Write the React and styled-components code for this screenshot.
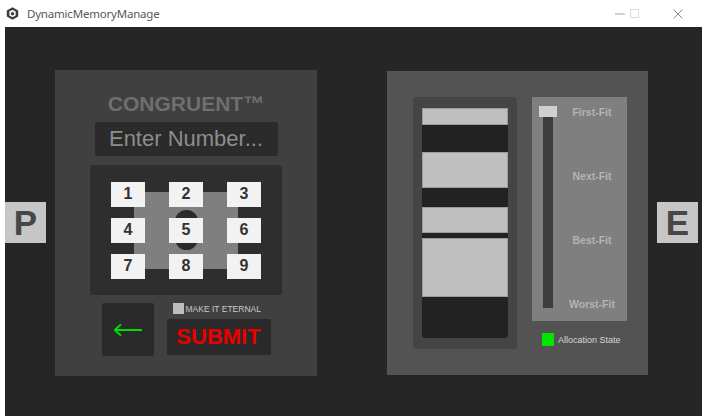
import React from 'react';
import styled, { createGlobalStyle } from 'styled-components';

const Global = createGlobalStyle`
  html, body { margin: 0; padding: 0; background: #fff; }
  body { font-family: "Liberation Sans", Arial, sans-serif; }
  #root { width: 702px; height: 418px; }
  * { box-sizing: border-box; }
`;

const Window = styled.div`
  width: 702px;
  height: 418px;
  display: flex;
  flex-direction: column;
  background: #fff;
  overflow: hidden;
`;

const TitleBar = styled.div`
  height: 27px;
  flex: none;
  display: flex;
  align-items: center;
  padding-left: 6px;
  padding-right: 19px;
`;

const TitleText = styled.span`
  margin-left: 8px;
  font-family: "Noto Sans", "Open Sans", sans-serif;
  font-size: 11.5px;
  color: #585858;
  letter-spacing: -0.2px;
`;

const Controls = styled.div`
  margin-left: auto;
  display: flex;
  align-items: center;
`;

const ControlBtn = styled.span`
  display: flex;
  margin-left: ${p => p.$gap || 0}px;
`;

const Body = styled.div`
  flex: 1;
  margin: 0 0 2px 5px;
  background: #262626;
  display: flex;
  align-items: flex-start;
`;

const SideTab = styled.div`
  width: 41px;
  height: 41px;
  margin-top: 175px;
  margin-left: ${p => p.$ml || 0}px;
  margin-right: ${p => p.$mr || 0}px;
  background: #c6c6c6;
  color: #474747;
  font-weight: bold;
  font-size: 35px;
  display: flex;
  align-items: center;
  justify-content: center;
  line-height: 1;
`;

const LeftPanel = styled.div`
  width: 262px;
  height: 306px;
  margin-top: 43px;
  background: #404040;
  display: flex;
  flex-direction: column;
  align-items: center;
  padding-top: 23px;
`;

const Brand = styled.div`
  font-weight: bold;
  font-size: 21px;
  line-height: 21px;
  color: #6f6f6f;
`;

const NumberInput = styled.div`
  width: 183px;
  height: 34px;
  margin-top: 8px;
  background: #2b2b2b;
  border-radius: 2px;
  color: #8d8d8d;
  font-size: 22px;
  display: flex;
  align-items: center;
  justify-content: center;
`;

const Keypad = styled.div`
  width: 192px;
  height: 130px;
  margin-top: 9px;
  background: #2e2e2e;
  border-radius: 3px;
  display: grid;
  place-items: center;
  & > * { grid-area: 1 / 1; }
`;

const Plate = styled.div`
  width: 104px;
  height: 77px;
  background: #7f7f7f;
`;

const Zero = styled.div`
  width: 23px;
  height: 40px;
  border-radius: 11.5px;
  background: #2b2b2b;
`;

const KeyGrid = styled.div`
  display: grid;
  grid-template-columns: repeat(3, 34px);
  grid-auto-rows: 25px;
  column-gap: 24px;
  row-gap: 11px;
`;

const Key = styled.div`
  background: #f2f2f2;
  color: #333;
  font-weight: bold;
  font-size: 16px;
  display: flex;
  align-items: center;
  justify-content: center;
`;

const BottomRow = styled.div`
  margin-top: 8px;
  display: flex;
  gap: 13px;
  align-items: flex-start;
`;

const BackButton = styled.div`
  width: 52px;
  height: 53px;
  background: #2a2a2a;
  border-radius: 2px;
  display: flex;
  align-items: center;
  justify-content: center;
`;

const ActionCol = styled.div`
  width: 104px;
  display: flex;
  flex-direction: column;
`;

const CheckRow = styled.div`
  height: 11px;
  padding-left: 6px;
  display: flex;
  align-items: center;
  gap: 2px;
`;

const CheckBox = styled.div`
  width: 11px;
  height: 11px;
  background: #bdbdbd;
`;

const CheckLabel = styled.span`
  font-size: 8.5px;
  color: #c9c9c9;
  white-space: nowrap;
`;

const Submit = styled.div`
  margin-top: 5px;
  height: 36px;
  background: #2a2a2a;
  border-radius: 2px;
  color: #e80000;
  font-weight: bold;
  font-size: 22px;
  display: flex;
  align-items: center;
  justify-content: center;
`;

const RightPanel = styled.div`
  width: 261px;
  height: 304px;
  margin-top: 44px;
  margin-left: 70px;
  background: #535353;
  padding: 26px 0 0 26px;
  display: flex;
  gap: 15px;
  align-items: flex-start;
`;

const MemColumn = styled.div`
  width: 104px;
  height: 252px;
  background: #454545;
  border-radius: 3px;
  padding: 11px 9px;
  display: flex;
  flex-direction: column;
`;

const Block = styled.div`
  flex: none;
  height: ${p => p.$h}px;
  background: ${p => (p.$used ? '#222222' : '#bfbfbf')};
  box-shadow: ${p => (p.$used ? 'none' : 'inset 0 0 0 1px rgba(0,0,0,0.18)')};
  border-radius: ${p => (p.$last ? '0 0 3px 3px' : '0')};
`;

const SideCol = styled.div`
  display: flex;
  flex-direction: column;
`;

const SliderPanel = styled.div`
  width: 95px;
  height: 224px;
  background: #7f7f7f;
  display: flex;
`;

const SliderCol = styled.div`
  width: 18px;
  margin-left: 7px;
  padding-top: 9px;
  display: flex;
  flex-direction: column;
  align-items: center;
`;

const Handle = styled.div`
  width: 18px;
  height: 11px;
  background: #d0d0d0;
`;

const Track = styled.div`
  width: 10px;
  height: 191px;
  background: #3d3d3d;
`;

const FitLabels = styled.div`
  flex: 1;
  display: flex;
  flex-direction: column;
  justify-content: space-between;
  align-items: center;
  padding: 8px 0 10px;
`;

const FitLabel = styled.span`
  font-weight: bold;
  font-size: 10.5px;
  line-height: 14px;
  color: #b4b4b4;
`;

const Legend = styled.div`
  margin-top: 12px;
  padding-left: 10px;
  display: flex;
  align-items: center;
  gap: 4px;
`;

const Swatch = styled.div`
  width: 12px;
  height: 13px;
  background: #00e600;
`;

const LegendText = styled.span`
  font-size: 9px;
  color: #d6d6d6;
`;

const AppIcon = () => (
  <svg width="13" height="13" viewBox="0 0 13 13">
    <path d="M6.5 0.3 L12.2 3.4 L12.2 9.6 L6.5 12.7 L0.8 9.6 L0.8 3.4 Z" fill="#3a3a3a" />
    <path d="M6.5 2.8 L9.7 4.6 L9.7 8.4 L6.5 10.2 L3.3 8.4 L3.3 4.6 Z" fill="#f4f4f4" />
    <path d="M6.5 4.9 L8.1 5.8 L8.1 7.5 L6.5 8.4 L4.9 7.5 L4.9 5.8 Z" fill="#3a3a3a" />
  </svg>
);

const BackArrow = () => (
  <svg width="30" height="14" viewBox="0 0 30 14">
    <path d="M1.5 7 H29 M1.5 7 L8 1.5 M1.5 7 L8 12.5" stroke="#00e000" strokeWidth="1.8" fill="none" />
  </svg>
);

const blocks = [
  { h: 17, used: false },
  { h: 27, used: true },
  { h: 36, used: false },
  { h: 19, used: true },
  { h: 26, used: false },
  { h: 5, used: true },
  { h: 59, used: false },
  { h: 41, used: true },
];

export default function App() {
  return (
    <>
      <Global />
      <Window>
        <TitleBar>
          <AppIcon />
          <TitleText>DynamicMemoryManage</TitleText>
          <Controls>
            <ControlBtn>
              <svg width="10" height="2" viewBox="0 0 10 2"><path d="M0 1 H10" stroke="#a0a0a0" strokeWidth="1" /></svg>
            </ControlBtn>
            <ControlBtn $gap={5}>
              <svg width="9" height="9" viewBox="0 0 9 9"><rect x="0.5" y="0.5" width="8" height="8" stroke="#dcdcdc" fill="none" /></svg>
            </ControlBtn>
            <ControlBtn $gap={34}>
              <svg width="10" height="10" viewBox="0 0 10 10"><path d="M0.5 0.5 L9.5 9.5 M9.5 0.5 L0.5 9.5" stroke="#8a8a8a" strokeWidth="1" /></svg>
            </ControlBtn>
          </Controls>
        </TitleBar>
        <Body>
          <SideTab $mr={9}>P</SideTab>
          <LeftPanel>
            <Brand>CONGRUENT™</Brand>
            <NumberInput>Enter Number...</NumberInput>
            <Keypad>
              <Plate />
              <Zero />
              <KeyGrid>
                {[1, 2, 3, 4, 5, 6, 7, 8, 9].map(n => (
                  <Key key={n}>{n}</Key>
                ))}
              </KeyGrid>
            </Keypad>
            <BottomRow>
              <BackButton>
                <BackArrow />
              </BackButton>
              <ActionCol>
                <CheckRow>
                  <CheckBox />
                  <CheckLabel>MAKE IT ETERNAL</CheckLabel>
                </CheckRow>
                <Submit>SUBMIT</Submit>
              </ActionCol>
            </BottomRow>
          </LeftPanel>
          <RightPanel>
            <MemColumn>
              {blocks.map((b, i) => (
                <Block key={i} $h={b.h} $used={b.used} $last={i === blocks.length - 1} />
              ))}
            </MemColumn>
            <SideCol>
              <SliderPanel>
                <SliderCol>
                  <Handle />
                  <Track />
                </SliderCol>
                <FitLabels>
                  <FitLabel>First-Fit</FitLabel>
                  <FitLabel>Next-Fit</FitLabel>
                  <FitLabel>Best-Fit</FitLabel>
                  <FitLabel>Worst-Fit</FitLabel>
                </FitLabels>
              </SliderPanel>
              <Legend>
                <Swatch />
                <LegendText>Allocation State</LegendText>
              </Legend>
            </SideCol>
          </RightPanel>
          <SideTab $ml={9}>E</SideTab>
        </Body>
      </Window>
    </>
  );
}
